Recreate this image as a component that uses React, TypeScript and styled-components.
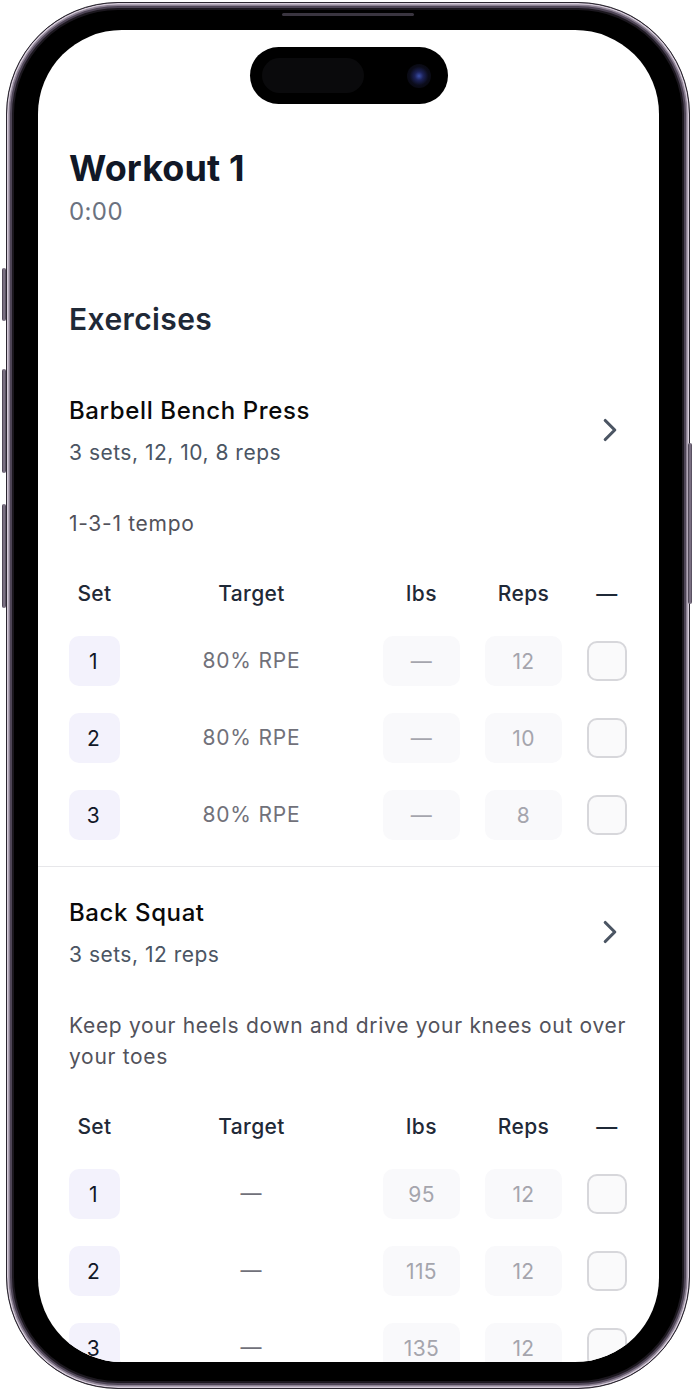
import React from "react";
import styled, { createGlobalStyle } from "styled-components";

interface SetRow {
  target: string;
  lbs: string;
  reps: string;
}

interface Exercise {
  name: string;
  summary: string;
  note: string;
  sets: SetRow[];
}

const exercises: Exercise[] = [
  {
    name: "Barbell Bench Press",
    summary: "3 sets, 12, 10, 8 reps",
    note: "1-3-1 tempo",
    sets: [
      { target: "80% RPE", lbs: "—", reps: "12" },
      { target: "80% RPE", lbs: "—", reps: "10" },
      { target: "80% RPE", lbs: "—", reps: "8" },
    ],
  },
  {
    name: "Back Squat",
    summary: "3 sets, 12 reps",
    note: "Keep your heels down and drive your knees out over your toes",
    sets: [
      { target: "—", lbs: "95", reps: "12" },
      { target: "—", lbs: "115", reps: "12" },
      { target: "—", lbs: "135", reps: "12" },
    ],
  },
];

const GlobalStyle = createGlobalStyle`
  html, body {
    margin: 0;
    padding: 0;
    background: #fff;
  }
  body {
    font-family: "Inter", "Noto Sans", sans-serif;
    -webkit-font-smoothing: antialiased;
  }
`;

const Chevron = () => (
  <ChevronIcon viewBox="0 0 24 24" fill="none">
    <polyline points="9 18 15 12 9 6" />
  </ChevronIcon>
);

const App = () => (
  <>
    <GlobalStyle />
    <Phone>
      <SideButton $side="left" $top={265} $height={53} />
      <SideButton $side="left" $top={366} $height={104} />
      <SideButton $side="left" $top={501} $height={104} />
      <SideButton $side="right" $top={440} $height={161} />
      <Speaker />
      <Screen>
        <Island>
          <IslandSensor />
          <Camera />
        </Island>
        <Intro>
          <Title>Workout 1</Title>
          <Timer>0:00</Timer>
          <SectionTitle>Exercises</SectionTitle>
        </Intro>
        {exercises.map((ex) => (
          <ExerciseBlock key={ex.name}>
            <ExerciseHead>
              <div>
                <ExerciseName>{ex.name}</ExerciseName>
                <ExerciseSummary>{ex.summary}</ExerciseSummary>
              </div>
              <Chevron />
            </ExerciseHead>
            <Note>{ex.note}</Note>
            <SetGrid>
              <HeadCell>Set</HeadCell>
              <HeadCell>Target</HeadCell>
              <HeadCell>lbs</HeadCell>
              <HeadCell>Reps</HeadCell>
              <HeadCell>—</HeadCell>
              {ex.sets.map((s, i) => (
                <React.Fragment key={i}>
                  <SetBadge>{i + 1}</SetBadge>
                  <TargetCell>{s.target}</TargetCell>
                  <ValueBox>{s.lbs}</ValueBox>
                  <ValueBox>{s.reps}</ValueBox>
                  <CheckBox />
                </React.Fragment>
              ))}
            </SetGrid>
          </ExerciseBlock>
        ))}
      </Screen>
    </Phone>
  </>
);

const Phone = styled.div`
  position: relative;
  box-sizing: border-box;
  width: 684px;
  height: 1387px;
  margin: 2px 0 0 6px;
  padding: 27px 30px 26px 31px;
  border-radius: 112px;
  background: #000;
  border: 1px solid #2b2630;
  box-shadow: inset 0 0 0 1.5px #d4cad8, inset 0 0 0 3px #8b8092,
    inset 0 0 0 5px #4e4556, inset 0 0 0 7px #1c181f;
`;

const SideButton = styled.div<{ $side: "left" | "right"; $top: number; $height: number }>`
  position: absolute;
  top: ${(p) => p.$top}px;
  height: ${(p) => p.$height}px;
  ${(p) => (p.$side === "left" ? "left: -5px;" : "right: -3px;")}
  width: 4px;
  border-radius: 2px;
  background: linear-gradient(90deg, #3e3645, #8a7f92 50%, #4a4252);
`;

const Speaker = styled.div`
  position: absolute;
  top: 10px;
  left: 50%;
  transform: translateX(-50%);
  width: 132px;
  height: 3px;
  border-radius: 2px;
  background: #3a3540;
`;

const Screen = styled.div`
  position: relative;
  height: 100%;
  border-radius: 84px;
  background: #fff;
  overflow: hidden;
`;

const Island = styled.div`
  position: absolute;
  top: 17px;
  left: 50%;
  transform: translateX(-50%);
  box-sizing: border-box;
  width: 198px;
  height: 57px;
  padding: 0 17px 0 12px;
  border-radius: 29px;
  background: #000;
  display: flex;
  align-items: center;
  justify-content: space-between;
`;

const IslandSensor = styled.div`
  width: 102px;
  height: 35px;
  border-radius: 18px;
  background: #0a0a0c;
`;

const Camera = styled.div`
  width: 24px;
  height: 24px;
  border-radius: 50%;
  background: radial-gradient(circle, #3b4fa8 0, #1c2258 25%, #0b0c1a 55%, #050507 100%);
`;

const Intro = styled.div`
  padding: 118px 32px 27px 31px;
`;

const Title = styled.h1`
  margin: 0;
  font-size: 36px;
  line-height: 40px;
  font-weight: 700;
  color: #111827;
  letter-spacing: 0.1px;
`;

const Timer = styled.div`
  margin-top: 8px;
  font-size: 24px;
  line-height: 32px;
  color: #6b7280;
  letter-spacing: 0.4px;
`;

const SectionTitle = styled.h2`
  margin: 72px 0 0;
  font-size: 30px;
  line-height: 38px;
  font-weight: 600;
  color: #1f2937;
  letter-spacing: 0.4px;
`;

const ExerciseBlock = styled.section`
  padding: 30px 32px 26px 31px;
  border-bottom: 1px solid #e7e7ea;
`;

const ExerciseHead = styled.div`
  display: flex;
  align-items: center;
  justify-content: space-between;
`;

const ExerciseName = styled.div`
  font-size: 24px;
  line-height: 32px;
  font-weight: 500;
  color: #0a0a0a;
  letter-spacing: 0.6px;
`;

const ExerciseSummary = styled.div`
  margin-top: 11px;
  font-size: 21px;
  line-height: 30px;
  color: #4b5563;
  letter-spacing: 0.5px;
`;

const ChevronIcon = styled.svg`
  width: 38px;
  height: 38px;
  margin: -3px -2px 0 0;
  stroke: #4b5563;
  stroke-width: 2;
  stroke-linecap: round;
  stroke-linejoin: round;
`;

const Note = styled.p`
  margin: 40px 0 0;
  font-size: 21px;
  line-height: 31px;
  color: #52525b;
  letter-spacing: 0.7px;
`;

const SetGrid = styled.div`
  margin-top: 40px;
  display: grid;
  grid-template-columns: 51px 1fr 77px 77px 40px;
  column-gap: 25px;
  row-gap: 27px;
  align-items: center;
  justify-items: center;
`;

const HeadCell = styled.div`
  font-size: 21px;
  line-height: 30px;
  font-weight: 500;
  color: #1f2937;
  letter-spacing: 0.4px;
`;

const cellBox = `
  box-sizing: border-box;
  width: 100%;
  height: 50px;
  border-radius: 10px;
  display: flex;
  align-items: center;
  justify-content: center;
  font-size: 21px;
  letter-spacing: 0.4px;
`;

const SetBadge = styled.div`
  ${cellBox}
  padding-right: 2px;
  background: #f3f2fc;
  color: #111827;
`;

const TargetCell = styled.div`
  font-size: 21px;
  line-height: 30px;
  color: #71717a;
  letter-spacing: 0.8px;
`;

const ValueBox = styled.div`
  ${cellBox}
  background: #f9f9fb;
  color: #a5a5ad;
`;

const CheckBox = styled.div`
  box-sizing: border-box;
  width: 40px;
  height: 40px;
  border: 2px solid #d7d7db;
  border-radius: 10px;
  background: #fafafb;
`;

export default App;
